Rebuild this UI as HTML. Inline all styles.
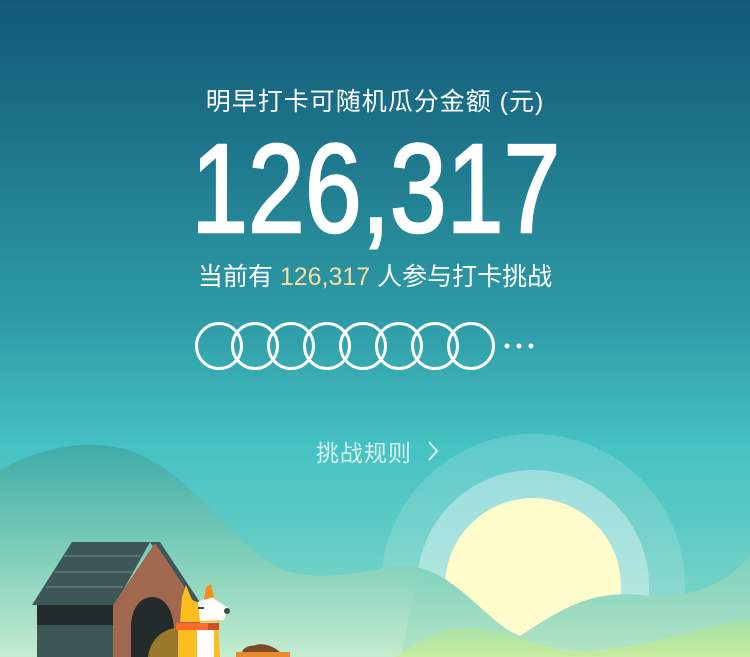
<!DOCTYPE html>
<html><head><meta charset="utf-8"><style>
html,body{margin:0;padding:0;overflow:hidden}
body{width:750px;height:657px;overflow:hidden;position:relative;font-family:"Liberation Sans","Noto Sans CJK SC",sans-serif;
background:linear-gradient(180deg,#135878 0%,#1f7a8e 25%,#2f9ea8 50%,#45c2c4 68%,#5ccac4 80%,#8fdcc8 100%);}
.t{position:absolute;left:0;width:750px;text-align:center;color:#fff;white-space:nowrap}
#t1{top:82px;font-size:25px;letter-spacing:1px}
#num{top:124px;font-size:126px;line-height:130px;-webkit-text-stroke:2.5px #fff;transform:scaleX(0.81);transform-origin:379px 0}
#t2{top:257px;font-size:25px}
#t2 span{color:#f9dca0}
#rule{top:434px;font-size:23px;color:#d6f1ee;letter-spacing:1px}
svg{position:absolute;left:0;top:0}
</style></head><body>
<svg width="750" height="657" viewBox="0 0 750 657">
<defs>
<linearGradient id="h1" x1="0" y1="0" x2="0" y2="1"><stop offset="0" stop-color="#3eaca8"/><stop offset="0.5" stop-color="#7ccdb8"/><stop offset="1" stop-color="#c4ecd0"/></linearGradient>
<linearGradient id="h2" x1="0" y1="0" x2="0" y2="1"><stop offset="0" stop-color="#7dd1bf"/><stop offset="1" stop-color="#b4e4c4"/></linearGradient>
<linearGradient id="h3" x1="0" y1="0" x2="0" y2="1"><stop offset="0" stop-color="#a4e0a8"/><stop offset="1" stop-color="#c6eca0"/></linearGradient>
</defs>
<circle cx="533" cy="586" r="152" fill="#ffffff" opacity="0.15"/>
<circle cx="533" cy="586" r="116" fill="#ffffff" opacity="0.35"/>
<circle cx="533" cy="586" r="88" fill="#fefccb"/>
<path d="M0 470 C40 448 80 440 120 448 C190 462 240 560 290 572 C340 585 390 560 420 568 C460 578 490 625 520 636 C560 610 590 590 640 595 C700 600 730 580 750 555 L750 657 L0 657Z" fill="url(#h1)"/>
<path d="M420 568 C460 578 490 625 520 636 C560 610 590 590 640 595 C700 600 730 580 750 555 L750 657 L400 657Z" fill="url(#h2)"/>
<path d="M395 657 C420 640 440 628 465 628 C520 630 540 655 600 650 C660 645 700 625 750 620 L750 657Z" fill="url(#h3)"/>
<g stroke="#fff" stroke-width="3" fill="none">
<circle cx="219" cy="346" r="22.5"/><circle cx="255" cy="346" r="22.5"/><circle cx="291" cy="346" r="22.5"/><circle cx="327" cy="346" r="22.5"/><circle cx="363" cy="346" r="22.5"/><circle cx="399" cy="346" r="22.5"/><circle cx="435" cy="346" r="22.5"/><circle cx="471" cy="346" r="22.5"/>
</g>
<g fill="#fff"><circle cx="507" cy="346" r="2.5"/><circle cx="519" cy="346" r="2.5"/><circle cx="531" cy="346" r="2.5"/></g>
<path d="M429 442 L437 451 L429 460" stroke="#d6f1ee" stroke-width="2" fill="none"/>
<rect x="37" y="604" width="80" height="53" fill="#3d5658"/>
<rect x="37" y="604" width="80" height="21" fill="#232b2b"/>
<path d="M32 605 L72 542 L150 542 L115 605Z" fill="#3d5658"/>
<path d="M150 542 L160 542 L205 610 L200 620Z" fill="#3d5658"/>
<path d="M64 556 L140 556 M55 572 L132 572 M46 587 L123 587" stroke="#5a7275" stroke-width="2"/>
<path d="M155 543 L113 605 L113 657 L200 657 L200 610Z" fill="#a0684f"/>
<path d="M131 657 L131 628 C131 605 143 597 152 597 C162 597 172 605 174 628 L174 657Z" fill="#232b2b"/>
<path d="M148 657 C150 640 162 630 175 628 L178 657Z" fill="#9a7a2a"/>
<path d="M178 657 L178 625 L218 625 L220 657Z" fill="#fbbd1f"/>
<path d="M197 628 L214 628 L214 657 L197 657Z" fill="#fff"/>
<rect x="176" y="623" width="43" height="7" fill="#ff6b2c"/>
<rect x="208" y="623" width="11" height="7" fill="#d2521e"/>
<path d="M180 622 L182 597 L186 585 L192 600 L205 605 L212 595 L228 612 L218 622Z" fill="#fbbd1f"/>
<path d="M198 602 L210 596 L228 608 L224 620 L200 621Z" fill="#fff"/>
<path d="M204 600 L206 587 L211 584 L214 597Z" fill="#f0901a"/>
<circle cx="227" cy="611" r="3" fill="#3d4a4a"/>
<rect x="198" y="607" width="6" height="2" fill="#3d4a4a"/>
<path d="M242 652 C245 645 252 646 256 645 C262 643 272 645 280 652Z" fill="#7a4a22"/>
<rect x="236" y="652" width="54" height="5" fill="#e88a2e"/>
</svg>
<div class="t" id="t1">明早打卡可随机瓜分金额 (元)</div>
<div class="t" id="num">126,317</div>
<div class="t" id="t2">当前有 <span>126,317</span> 人参与打卡挑战</div>
<div class="t" id="rule">挑战规则&nbsp;&nbsp;&nbsp;</div>
</body></html>
